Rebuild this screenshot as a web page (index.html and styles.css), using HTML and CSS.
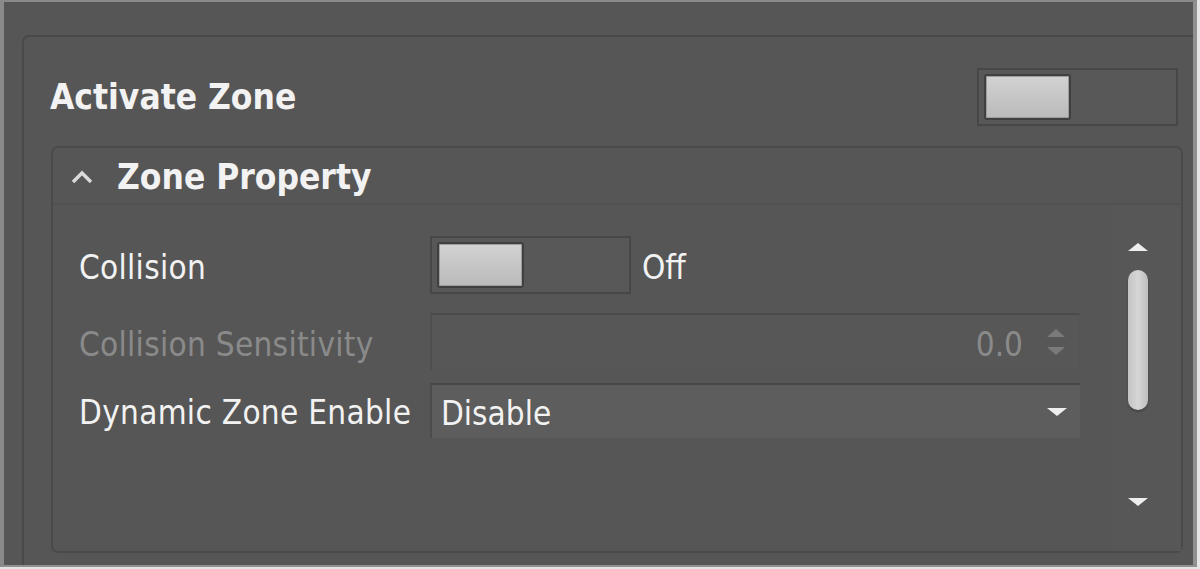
FILE: index.html
```html
<!DOCTYPE html>
<html>
<head>
<meta charset="utf-8">
<link rel="stylesheet" href="styles.css">
</head>
<body>
<div class="screen">
  <div class="panel">
    <div class="top-row">
      <span class="title">Activate Zone</span>
      <div class="toggle"><div class="knob"></div></div>
    </div>
    <div class="group">
      <div class="group-head">
        <svg class="chev" width="24" height="16" viewBox="0 0 24 16"><path d="M3 13 L12 4 L21 13" fill="none" stroke="#dadada" stroke-width="3.5"/></svg>
        <span class="group-title">Zone Property</span>
      </div>
      <div class="group-body">
        <div class="rows">
          <div class="row row-collision">
            <span class="label">Collision</span>
            <div class="toggle small"><div class="knob"></div></div>
            <span class="state">Off</span>
          </div>
          <div class="row row-sens">
            <span class="label disabled">Collision Sensitivity</span>
            <div class="spin">
              <span class="spin-val">0.0</span>
              <div class="spin-arrows">
                <svg width="22" height="10" viewBox="0 0 22 10"><path d="M2 9 L11 1 L20 9 Z" fill="#7a7a7a"/></svg>
                <svg width="22" height="10" viewBox="0 0 22 10"><path d="M2 1 L11 9 L20 1 Z" fill="#7a7a7a"/></svg>
              </div>
            </div>
          </div>
          <div class="row row-dyn">
            <span class="label">Dynamic Zone Enable</span>
            <div class="combo">
              <span class="combo-val">Disable</span>
              <svg width="22" height="10" viewBox="0 0 22 10"><path d="M1 1 L11 9 L21 1 Z" fill="#eeeeee"/></svg>
            </div>
          </div>
        </div>
        <div class="scrollbar">
          <svg class="sb-arrow" width="22" height="10" viewBox="0 0 22 10"><path d="M1 9 L11 1 L21 9 Z" fill="#eeeeee"/></svg>
          <div class="sb-thumb"></div>
          <svg class="sb-arrow down" width="22" height="10" viewBox="0 0 22 10"><path d="M1 1 L11 9 L21 1 Z" fill="#eeeeee"/></svg>
        </div>
      </div>
    </div>
  </div>
</div>
</body>
</html>
```
FILE: styles.css
```css
html, body {
  margin: 0;
  padding: 0;
  background: #e6e6e6;
}
body {
  width: 1200px;
  height: 569px;
  overflow: hidden;
  font-family: "DejaVu Sans Condensed", "DejaVu Sans", sans-serif;
  color: #f2f2f2;
}
.screen {
  box-sizing: border-box;
  width: 1197px;
  height: 567px;
  background: #565656;
  border-top: 2px solid #8a8a8a;
  border-left: 4px solid #8a8a8a;
  border-right: 4px solid #909090;
  border-bottom: 2px solid #909090;
  box-shadow: -1px -1px 0 #444;
  padding: 33px 0 0 18px;
  overflow: hidden;
}
.panel {
  box-sizing: border-box;
  height: 560px;
  border-top: 2px solid #494949;
  border-left: 2px solid #494949;
  border-top-left-radius: 7px;
  padding: 31px 0 0 0;
}
.top-row {
  display: flex;
  align-items: center;
  justify-content: space-between;
  height: 58px;
  padding: 0 15px 0 26px;
}
.title {
  font-weight: bold;
  font-size: 35px;
}
.toggle {
  box-sizing: border-box;
  width: 201px;
  height: 58px;
  border: 2px solid #474747;
  background: #585858;
  padding: 5px;
  display: flex;
  align-items: center;
}
.knob {
  box-sizing: border-box;
  width: 87px;
  height: 46px;
  border: 2px solid #404040;
  border-radius: 3px;
  background: linear-gradient(#d2d2d2, #bababa);
  box-shadow: inset 0 0 0 1px #9c9c9c;
}
.group {
  box-sizing: border-box;
  margin: 20px 10px 0 27px;
  height: 407px;
  border: 2px solid #4a4a4a;
  border-radius: 7px;
}
.group-head {
  height: 55px;
  border-bottom: 2px solid #515151;
  display: flex;
  align-items: center;
  padding-left: 17px;
}
.chev {
  margin-right: 23px;
  margin-top: 2px;
}
.group-title {
  font-weight: bold;
  font-size: 35px;
  padding-top: 2px;
}
.group-body {
  display: flex;
  height: 346px;
}
.rows {
  flex: 1;
  padding: 31px 0 0 26px;
}
.row {
  display: flex;
  align-items: center;
}
.row-collision { height: 58px; }
.row-sens { height: 57px; margin-top: 19px; }
.row-dyn { height: 55px; margin-top: 13px; }
.label {
  width: 351px;
  flex: none;
  font-size: 33px;
  letter-spacing: 0.3px;
  white-space: nowrap;
  padding-top: 4px;
}
.label.disabled {
  color: #8a8a8a;
  padding-top: 6px;
}
.state {
  font-size: 33px;
  margin-left: 11px;
  padding-top: 4px;
}
.spin {
  box-sizing: border-box;
  width: 650px;
  height: 57px;
  border-top: 2px solid #4b4b4b;
  border-left: 2px solid #4e4e4e;
  border-right: 1px solid #545454;
  border-bottom: 1px solid #545454;
  background: #575757;
  display: flex;
  align-items: center;
  justify-content: flex-end;
  padding-right: 12px;
}
.spin-val {
  font-size: 33px;
  color: #8a8a8a;
  margin-right: 22px;
  padding-top: 4px;
}
.spin-arrows {
  display: flex;
  flex-direction: column;
  gap: 8px;
}
.spin-arrows svg { display: block; }
.combo {
  box-sizing: border-box;
  width: 650px;
  height: 55px;
  border-top: 2px solid #474747;
  border-left: 2px solid #4c4c4c;
  background: #5d5d5d;
  display: flex;
  align-items: center;
  justify-content: space-between;
  padding: 0 12px 0 9px;
}
.combo-val {
  font-size: 33px;
  padding-top: 4px;
}
.scrollbar {
  width: 69px;
  flex: none;
  background: #575757;
  display: flex;
  flex-direction: column;
  align-items: flex-start;
  padding-left: 15px;
  box-sizing: border-box;
}
.sb-arrow {
  display: block;
  margin-top: 37px;
}
.sb-thumb {
  margin: 18px 0 0 1px;
  width: 20px;
  height: 140px;
  border-radius: 10px;
  background: linear-gradient(90deg, #c4c4c4, #d6d6d6 50%, #bdbdbd);
  box-shadow: 0 2px 2px #444;
}
.sb-arrow.down {
  margin-top: 87px;
}
```
